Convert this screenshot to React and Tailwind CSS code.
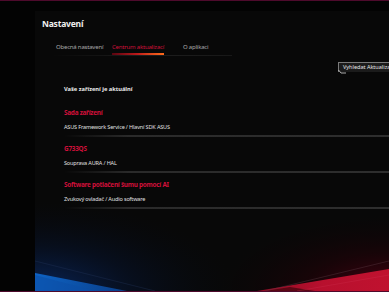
import React from 'react';

// Settings screen with the update centre tab open.

const font = { fontFamily: '"Noto Sans", "Open Sans", sans-serif' };

const items = [
    { title: 'Sada zařízení', desc: 'ASUS Framework Service / Hlavní SDK ASUS' },
    { title: 'G733QS', desc: 'Souprava AURA / HAL' },
    { title: 'Software potlačení šumu pomocí AI', desc: 'Zvukový ovladač / Audio software' },
];

const Divider = () => (
    <div className="h-[2px] mt-[3px] bg-gradient-to-r from-transparent via-[#2a2a2a] via-20% to-[#2e2e2e]" />
);

const BottomArt = () => (
    <svg className="absolute left-0 bottom-0" width="354" height="90" viewBox="0 0 354 90">
        <defs>
            <radialGradient id="blueGlow" cx="0" cy="90" r="200" gradientUnits="userSpaceOnUse" gradientTransform="translate(0 90) scale(1 0.45) translate(0 -90)">
                <stop offset="0" stopColor="#0a2a66" stopOpacity="0.9" />
                <stop offset="0.5" stopColor="#061636" stopOpacity="0.45" />
                <stop offset="1" stopColor="#050a14" stopOpacity="0" />
            </radialGradient>
            <radialGradient id="redGlow" cx="354" cy="90" r="170" gradientUnits="userSpaceOnUse" gradientTransform="translate(0 90) scale(1 0.45) translate(0 -90)">
                <stop offset="0" stopColor="#5a0016" stopOpacity="0.9" />
                <stop offset="0.5" stopColor="#2a0008" stopOpacity="0.45" />
                <stop offset="1" stopColor="#100004" stopOpacity="0" />
            </radialGradient>
            <linearGradient id="bluePoly" x1="0" y1="72" x2="90" y2="90" gradientUnits="userSpaceOnUse">
                <stop offset="0" stopColor="#0e63c4" />
                <stop offset="1" stopColor="#0a3f8a" />
            </linearGradient>
            <linearGradient id="redPoly" x1="220" y1="90" x2="354" y2="70" gradientUnits="userSpaceOnUse">
                <stop offset="0" stopColor="#8c0a22" />
                <stop offset="0.5" stopColor="#b8102e" />
                <stop offset="1" stopColor="#c0122f" />
            </linearGradient>
        </defs>
        <rect width="354" height="90" fill="url(#blueGlow)" />
        <rect width="354" height="90" fill="url(#redGlow)" />
        <polygon points="0,72 0,90 92,90" fill="url(#bluePoly)" />
        <polygon points="0,74 0,90 60,90" fill="#0b4ea6" opacity="0.6" />
        <line x1="0" y1="60" x2="120" y2="90" stroke="#2a3c66" strokeWidth="0.6" opacity="0.5" />
        <polygon points="222,90 354,68 354,90" fill="url(#redPoly)" />
        <polygon points="230,90 280,90 255,86" fill="#4a0610" opacity="0.8" />
        <line x1="230" y1="90" x2="354" y2="60" stroke="#5a3a44" strokeWidth="0.7" opacity="0.6" />
        <line x1="262" y1="90" x2="354" y2="74" stroke="#d03050" strokeWidth="0.6" opacity="0.5" />
    </svg>
);

export default function App() {
    return (
        <div style={font} className="w-[389px] h-[292px] bg-[#030303] border-t border-b border-[#4e0a2c] flex flex-col overflow-hidden">
            <div className="flex-1 flex pt-[10px]">
                <div className="w-[35px] shrink-0" />
                <div className="flex-1 relative bg-[#080808] overflow-hidden">
                    <BottomArt />
                    <div className="relative">
                        <div className="mt-[6px] ml-[7px] h-[14px] leading-[14px] text-[8.5px] tracking-[-0.2px] font-bold text-[#f0f0f0]">Nastavení</div>

                        <div className="mt-[10px] ml-[17px] w-[180px]">
                            <div className="flex pl-[4px] h-[14px] text-[6px] tracking-[-0.2px] leading-[12px]">
                                <div className="w-[56px] text-[#a8a8a8] whitespace-nowrap">Obecná nastavení</div>
                                <div className="w-[71px]">
                                    <div className="inline-flex flex-col">
                                        <span className="text-[#d0103a] whitespace-nowrap">Centrum aktualizací</span>
                                        <span className="h-[2px] bg-gradient-to-r from-[#5a0510] via-[#c01a1a] to-[#ff6a1a]" />
                                    </div>
                                </div>
                                <div className="text-[#a8a8a8] whitespace-nowrap">O aplikaci</div>
                            </div>
                            <div className="h-px bg-gradient-to-r from-transparent via-[#1e1e1e] to-[#181818]" />
                        </div>

                        <div className="mt-[6px] ml-[303px] h-[10px] flex">
                            <div className="relative h-[10px] pl-[4px] pr-[8px] bg-[#1b1b1b] border-l border-t border-[#7a7a7a] text-[5.5px] leading-[9px] text-[#e8e8e8] whitespace-nowrap">
                                Vyhledat Aktualizace
                                <svg className="absolute left-[-1px] bottom-[-2px]" width="8" height="4" viewBox="0 0 8 4">
                                    <path d="M0.5 0 L3 3 L8 3" stroke="#d8d8d8" strokeWidth="0.8" fill="none" />
                                </svg>
                            </div>
                        </div>

                        <div className="ml-[29px]">
                            <div className="mt-[12px] h-[10px] leading-[10px] text-[5.7px] font-bold text-[#ececec]">Vaše zařízení je aktuální</div>
                            {items.map((item, i) => (
                                <div key={item.title} className={i === 0 ? 'mt-[14px]' : 'mt-[7px]'}>
                                    <div className="h-[10px] leading-[10px] text-[6.4px] tracking-[-0.25px] font-bold text-[#d0103a] whitespace-nowrap">{item.title}</div>
                                    <div className="mt-[4px] h-[10px] leading-[10px] text-[5.5px] tracking-[-0.15px] text-[#e0e0e0] whitespace-nowrap">{item.desc}</div>
                                    <Divider />
                                </div>
                            ))}
                        </div>
                    </div>
                </div>
            </div>
        </div>
    );
}
